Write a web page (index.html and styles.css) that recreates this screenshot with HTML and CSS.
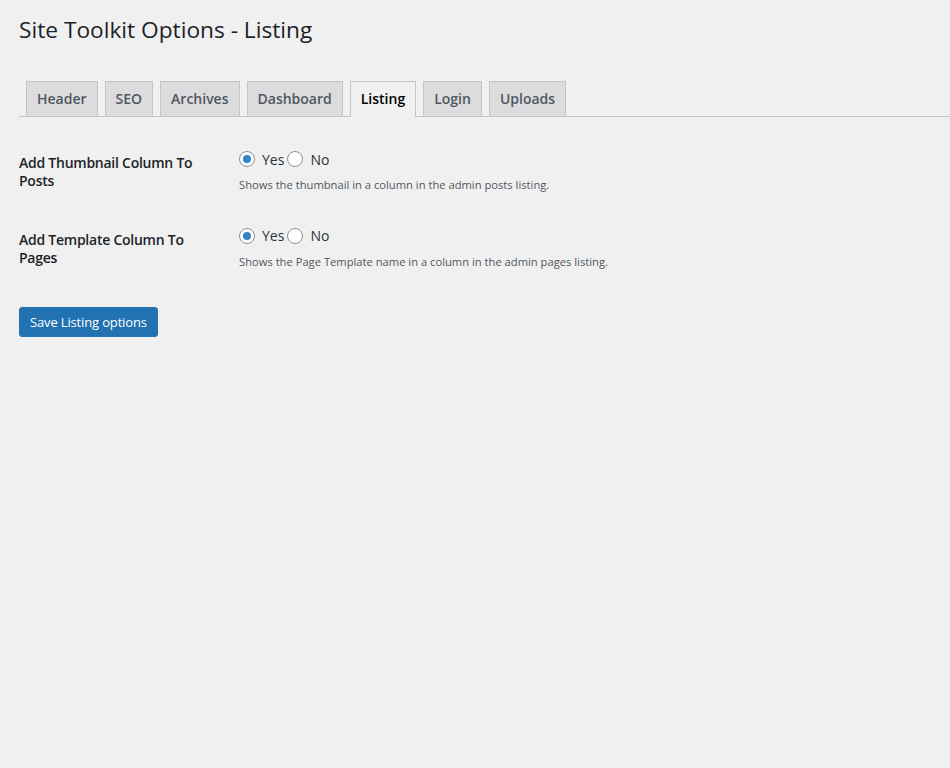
FILE: index.html
```html
<!DOCTYPE html>
<html>
<head>
<meta charset="utf-8">
<link rel="stylesheet" href="styles.css">
</head>
<body>
<div class="wrap">
  <h1 class="title">Site Toolkit Options - Listing</h1>
  <nav class="tabs">
    <a class="tab">Header</a>
    <a class="tab">SEO</a>
    <a class="tab">Archives</a>
    <a class="tab">Dashboard</a>
    <a class="tab active">Listing</a>
    <a class="tab">Login</a>
    <a class="tab">Uploads</a>
  </nav>
  <form class="form">
    <div class="row">
      <div class="th">Add Thumbnail Column To Posts</div>
      <div class="td">
        <div class="radios">
          <label class="radio"><span class="dot checked"></span>Yes</label>
          <label class="radio"><span class="dot"></span>No</label>
        </div>
        <p class="desc">Shows the thumbnail in a column in the admin posts listing.</p>
      </div>
    </div>
    <div class="row">
      <div class="th">Add Template Column To Pages</div>
      <div class="td">
        <div class="radios">
          <label class="radio"><span class="dot checked"></span>Yes</label>
          <label class="radio"><span class="dot"></span>No</label>
        </div>
        <p class="desc">Shows the Page Template name in a column in the admin pages listing.</p>
      </div>
    </div>
    <div class="submit">
      <button type="button" class="btn">Save Listing options</button>
    </div>
  </form>
</div>
</body>
</html>
```

FILE: styles.css
```css
html, body {
  margin: 0;
  padding: 0;
  background: #f0f0f1;
}
body {
  font-family: "Open Sans", "Noto Sans", sans-serif;
  color: #1d2327;
  font-size: 13px;
}
.wrap {
  padding: 0 0 0 19px;
}
.title {
  font-size: 22.7px;
  font-weight: 400;
  line-height: 30px;
  margin: 0;
  padding: 15px 0 0;
  color: #1d2327;
}
.tabs {
  display: flex;
  margin-top: 36px;
  border-bottom: 1px solid #c3c4c7;
  padding-left: 7px;
  gap: 7px;
}
.tab {
  display: block;
  padding: 5px 10px;
  font-size: 14px;
  line-height: 24px;
  font-weight: 600;
  background: #dcdcde;
  color: #50575e;
  border: 1px solid #c3c4c7;
  border-bottom: none;
}
.tab.active {
  background: #f0f0f1;
  color: #000;
  margin-bottom: -1px;
  padding-bottom: 6px;
}
.form {
  padding-top: 10px;
}
.row {
  display: flex;
}
.th {
  width: 200px;
  padding: 27px 10px 13.5px 0;
  font-size: 14px;
  font-weight: 600;
  line-height: 18px;
  letter-spacing: -0.25px;
}
.td {
  padding: 22px 10px 0;
}
.radios {
  display: flex;
  height: 20px;
  align-items: center;
}
.radio {
  display: flex;
  align-items: center;
  font-size: 14px;
  color: #2c3338;
}
.radio:first-child {
  margin-right: 3px;
}
.dot {
  box-sizing: border-box;
  width: 16px;
  height: 16px;
  border: 1px solid #8c8f94;
  border-radius: 50%;
  background: #fff;
  margin-right: 7px;
  position: relative;
}
.dot.checked::after {
  content: "";
  position: absolute;
  left: 3px;
  top: 3px;
  width: 8px;
  height: 8px;
  border-radius: 50%;
  background: #3582c4;
}
.desc {
  margin: 8px 0 0;
  font-size: 11.2px;
  line-height: 16px;
  color: #50575e;
}
.submit {
  padding-top: 26.5px;
}
.btn {
  font-family: inherit;
  font-size: 13px;
  letter-spacing: -0.15px;
  line-height: 28px;
  height: 30px;
  padding: 0 10px;
  background: #2271b1;
  color: #fff;
  border: 1px solid #2271b1;
  border-radius: 3px;
  white-space: nowrap;
}
```
